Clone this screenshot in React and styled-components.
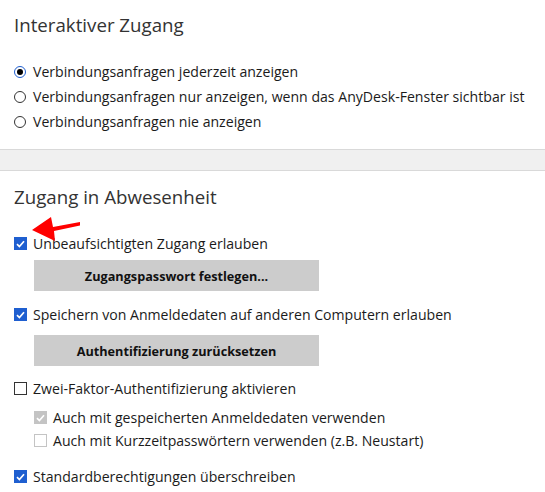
import React from 'react';
import styled, { createGlobalStyle } from 'styled-components';

const GlobalStyle = createGlobalStyle`
  html, body {
    margin: 0;
    padding: 0;
    background: #ffffff;
  }
  body {
    font-family: "Open Sans", "Noto Sans", sans-serif;
    color: #1b1b1b;
  }
`;

const Page = styled.div`
  position: relative;
  width: 545px;
  height: 492px;
  overflow: hidden;
  background: #ffffff;
`;

const Section = styled.section`
  padding: ${(p) => p.$pad || '0 14px'};
`;

const Title = styled.h2`
  margin: 0;
  font-size: 18.7px;
  font-weight: 400;
  line-height: 24px;
  color: #333333;
`;

const OptionList = styled.div`
  display: flex;
  flex-direction: column;
  margin-top: ${(p) => p.$top || 0}px;
  padding-left: ${(p) => p.$indent || 0}px;
`;

const Row = styled.label`
  display: flex;
  align-items: center;
  gap: 7px;
  height: ${(p) => p.$h || 25}px;
  margin-top: ${(p) => p.$top || 0}px;
  font-size: 14.1px;
  color: #1b1b1b;
  white-space: nowrap;
`;

const RadioMark = styled.span`
  box-sizing: border-box;
  width: 12px;
  height: 12px;
  border-radius: 50%;
  border: 1px solid ${(p) => (p.$on ? '#1f5fd0' : '#333333')};
  display: flex;
  align-items: center;
  justify-content: center;
  flex-shrink: 0;
  &::after {
    content: '';
    width: 6px;
    height: 6px;
    border-radius: 50%;
    background: #000000;
    display: ${(p) => (p.$on ? 'block' : 'none')};
  }
`;

const BoxMark = styled.span`
  box-sizing: border-box;
  width: 13px;
  height: 13px;
  flex-shrink: 0;
  display: flex;
  align-items: center;
  justify-content: center;
  background: ${(p) => (p.$on ? (p.$dim ? '#c4c4c4' : '#1f5fd0') : '#ffffff')};
  border: 1px solid
    ${(p) => (p.$on ? (p.$dim ? '#c4c4c4' : '#1f5fd0') : p.$dim ? '#c4c4c4' : '#333333')};
`;

const Band = styled.div`
  height: 20px;
  margin-top: 15px;
  background: #f0f0f0;
  border-top: 1px solid #d9d9d9;
  border-bottom: 1px solid #d9d9d9;
`;

const Button = styled.button`
  display: block;
  width: 285px;
  height: 31px;
  margin: ${(p) => p.$m || '0'};
  margin-left: 20px;
  padding: 0;
  border: none;
  background: #cccccc;
  font-family: "Open Sans", "Noto Sans", sans-serif;
  font-size: 12.7px;
  font-weight: 700;
  color: #111111;
`;

const Arrow = styled.svg`
  position: absolute;
  left: 28px;
  top: 212px;
`;

const Check = () => (
  <svg width="9" height="8" viewBox="0 0 9 8">
    <path d="M1 4.2 L3.4 6.5 L8 1.3" fill="none" stroke="#ffffff" strokeWidth="1.7" />
  </svg>
);

const Radio = ({ on, children }) => (
  <Row>
    <RadioMark $on={on} />
    <span>{children}</span>
  </Row>
);

const CheckRow = ({ on, dim, top, h, children }) => (
  <Row $top={top} $h={h}>
    <BoxMark $on={on} $dim={dim}>{on && <Check />}</BoxMark>
    <span style={{ marginLeft: -1 }}>{children}</span>
  </Row>
);

const App = () => (
  <Page>
    <GlobalStyle />
    <Section $pad="13px 14px 0">
      <Title>Interaktiver Zugang</Title>
      <OptionList $top={22}>
        <Radio on>Verbindungsanfragen jederzeit anzeigen</Radio>
        <Radio>Verbindungsanfragen nur anzeigen, wenn das AnyDesk-Fenster sichtbar ist</Radio>
        <Radio>Verbindungsanfragen nie anzeigen</Radio>
      </OptionList>
    </Section>
    <Band />
    <Section $pad="14px 14px 0">
      <Title>Zugang in Abwesenheit</Title>
      <CheckRow on top={22}>Unbeaufsichtigten Zugang erlauben</CheckRow>
      <Button $m="4px 0 0">Zugangspasswort festlegen...</Button>
      <CheckRow on top={11}>Speichern von Anmeldedaten auf anderen Computern erlauben</CheckRow>
      <Button $m="8px 0 0">Authentifizierung zurücksetzen</Button>
      <CheckRow top={10}>Zwei-Faktor-Authentifizierung aktivieren</CheckRow>
      <OptionList $indent={20} $top={5}>
        <CheckRow on dim h={23}>Auch mit gespeicherten Anmeldedaten verwenden</CheckRow>
        <CheckRow dim h={23}>Auch mit Kurzzeitpasswörtern verwenden (z.B. Neustart)</CheckRow>
      </OptionList>
      <CheckRow on top={12}>Standardberechtigungen überschreiben</CheckRow>
    </Section>
    <Arrow width="60" height="32" viewBox="0 0 60 32">
      <path d="M4 18 L23 5 L25 15 L52 10 L52 13.5 L26 19 L27 29 Z" fill="#ff0000" />
    </Arrow>
  </Page>
);

export default App;
